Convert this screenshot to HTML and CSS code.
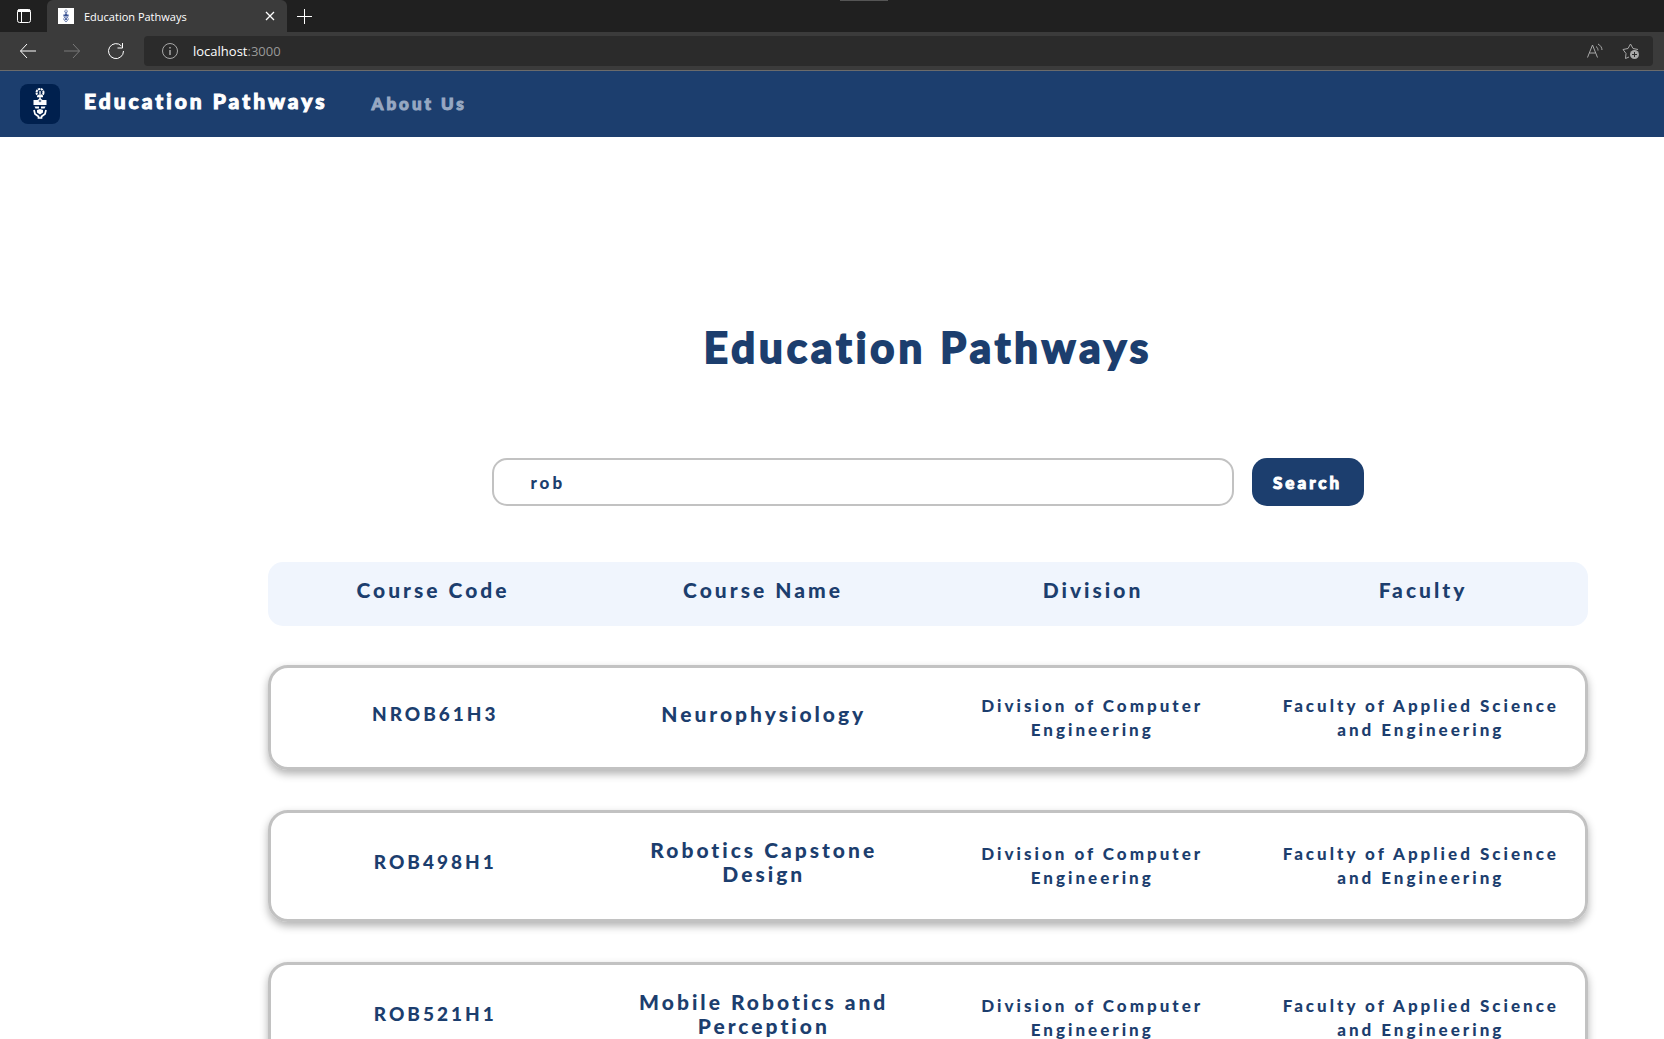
FILE: index.html
```html
<!DOCTYPE html>
<html lang="en">
<head>
<meta charset="utf-8">
<meta name="viewport" content="width=device-width, initial-scale=1">
<title>Education Pathways</title>
<link rel="stylesheet" href="styles.css">
</head>
<body>
<svg class="defs" aria-hidden="true">
  <symbol id="crest" viewBox="0 0 40 40">
    <g fill="none" stroke="currentColor">
      <circle cx="20" cy="8.500" r="3.500" stroke-width="2" stroke-dasharray="2.200 .6"/>
      <path d="M17 12.500h6M20 7v9" stroke-width="1.300"/>
    </g>
    <path fill="currentColor" d="M13.500 16h4l2.500-2 2.500 2h4v5h-13zM14.500 22.500h4.500v2h-3.500zM21 22.500h4.500l-1 2H21zM17 26l3-1 3 1v2.500l-3 2-3-2z"/>
    <circle cx="20" cy="17" r="1.300" fill="#00204e" opacity=".6"/>
    <path d="M14 26l1 4 3.500 2.500v1.500h3v-1.500l3.500-2.500 1-4" fill="none" stroke="currentColor" stroke-width="1.700"/>
  </symbol>
</svg>
<div class="window">
  <div class="tabs">
    <button class="tab-actions" aria-label="Tab actions">
      <svg width="16" height="16" viewBox="0 0 16 16"><rect x="1.500" y="1.500" width="13" height="13" rx="2"/><path d="M2 3.500h12M5.500 4v10" /><path d="M2 2.500h12" stroke-width="2"/></svg>
    </button>
    <div class="tab">
      <span class="favicon"><svg width="16" height="16"><use href="#crest"/></svg></span>
      <span class="tab-title">Education Pathways</span>
      <button class="close" aria-label="Close tab"><svg width="10" height="10" viewBox="0 0 10 10"><path d="M1 1l8 8M9 1l-8 8" stroke-width="1.300"/></svg></button>
    </div>
    <button class="new-tab" aria-label="New tab"><svg width="15" height="15" viewBox="0 0 15 15"><path d="M7.500 0v15M0 7.500h15"/></svg></button>
    <span class="handle"></span>
  </div>
  <div class="toolbar">
    <button aria-label="Back"><svg width="18" height="16" viewBox="0 0 18 16"><path d="M8 1L1.500 8 8 15M1.500 8H17"/></svg></button>
    <button class="disabled" aria-label="Forward"><svg width="18" height="16" viewBox="0 0 18 16"><path d="M10 1l6.500 7L10 15M16.500 8H1"/></svg></button>
    <button aria-label="Refresh"><svg width="18" height="18" viewBox="0 0 18 18"><path d="M16.500 9A7.500 7.500 0 1 1 14.500 4M15.500 1v5h-5"/></svg></button>
    <div class="address">
      <svg width="16" height="16" viewBox="0 0 16 16"><circle cx="8" cy="8" r="7.500"/><path d="M8 7v5M8 4v1.500" stroke-width="1.500"/></svg>
      <span class="url">localhost<span>:3000</span></span>
      <button aria-label="Read aloud"><svg width="18" height="16" viewBox="0 0 18 16"><path d="M1.500 14.500L6.500 2l5 12.500M3.500 10h6M10 3.500c1.500 1 2 2.500 2 4M12 1c2.500 1.500 4 3.500 4 6"/></svg></button>
      <button aria-label="Add to favorites"><svg width="18" height="18" viewBox="0 0 18 18"><path d="M7 15l-3.500 1.500.5-5L1 7.500l5-1L8.500 2 11 6.500l5 1"/><circle cx="12.500" cy="12.500" r="4.500" class="badge"/><path d="M12.500 10v5M10 12.500h5" class="badge-plus"/></svg></button>
    </div>
  </div>
  <div class="page">
    <nav class="navbar">
      <a class="logo" href="#" aria-label="Home"><svg width="40" height="40"><use href="#crest"/></svg></a>
      <a class="brand" href="#">Education Pathways</a>
      <a class="nav-link" href="#">About Us</a>
    </nav>
    <main>
      <h1>Education Pathways</h1>
      <form class="search">
        <input type="text" value="rob" aria-label="Search courses">
        <button type="button">Search</button>
      </form>
      <table>
        <thead>
          <tr><th scope="col">Course Code</th><th scope="col">Course Name</th><th scope="col">Division</th><th scope="col">Faculty</th></tr>
        </thead>
        <tbody>
          <tr><td class="major code">NROB61H3</td><td class="major">Neurophysiology</td><td>Division of Computer Engineering</td><td>Faculty of Applied Science and Engineering</td></tr>
          <tr><td class="major code">ROB498H1</td><td class="major">Robotics Capstone Design</td><td>Division of Computer Engineering</td><td>Faculty of Applied Science and Engineering</td></tr>
          <tr><td class="major code">ROB521H1</td><td class="major">Mobile Robotics and Perception</td><td>Division of Computer Engineering</td><td>Faculty of Applied Science and Engineering</td></tr>
        </tbody>
      </table>
    </main>
  </div>
</div>
</body>
</html>
```
FILE: styles.css
```css
* { box-sizing: border-box; }
body {
  margin: 0;
  background: #fff;
  color: #1c3e6e;
  font-family: Lato, "Open Sans", sans-serif;
  font-weight: 900;
}
button { border: 0; padding: 0; background: none; color: inherit; font: inherit; }
a { color: inherit; text-decoration: none; }
.defs { position: absolute; width: 0; height: 0; }
.window { display: flex; flex-direction: column; height: 100vh; }

/* Browser frame */
.tabs, .toolbar {
  color: #fff;
  font-family: "Open Sans", sans-serif;
  font-weight: 400;
}
.tabs svg, .toolbar svg { display: block; fill: none; stroke: currentColor; }
.tabs .favicon svg { stroke: none; }
.tabs { position: relative; display: flex; flex: none; height: 32px; background: #202020; }
.tab-actions { width: 47px; padding-left: 16px; }
.tab {
  display: flex;
  align-items: center;
  width: 240px;
  padding: 0 12px 0 11px;
  border-radius: 6px 6px 0 0;
  background: #3b3b3b;
  font-size: 11px;
}
.favicon { margin-right: 10px; background: #fff; color: #3c5596; }
.tab-title { flex: 1; }
.new-tab { padding: 0 10px; }
.handle { position: absolute; top: 0; left: 50%; width: 48px; height: 1px; margin-left: 8px; background: #555; }
.toolbar {
  display: flex;
  align-items: center;
  gap: 26px;
  flex: none;
  height: 39px;
  padding: 0 11px 0 19px;
  border-bottom: 1px solid #6b6b6b;
  background: #3b3b3b;
}
.disabled { color: #7a7a7a; }
.address {
  display: flex;
  flex: 1;
  align-items: center;
  gap: 18px;
  height: 30px;
  margin-left: -7px;
  padding: 0 13px 0 18px;
  border-radius: 4px;
  background: #2b2b2b;
  color: #a8a8a8;
}
.url { flex: 1; margin-left: -3px; color: #fff; font-size: 13px; }
.url span { color: #999; }
.toolbar .badge { fill: #a8a8a8; stroke: none; }
.badge-plus { stroke: #2b2b2b; }

/* Site */
.page { flex: 1; min-height: 0; overflow-y: auto; scrollbar-width: none; }
.navbar {
  display: flex;
  align-items: center;
  height: 66px;
  padding: 0 20px;
  background: #1c3e6e;
  color: #fff;
}
.logo { height: 40px; margin-right: 24px; border-radius: 8px; background: #00204e; }
.brand { padding-bottom: 7px; font-size: 21px; letter-spacing: 3px; }
.nav-link { margin-left: 44px; padding-bottom: 1px; color: #97a8c2; font-size: 17px; letter-spacing: 3px; }
.brand, .nav-link, .search button { -webkit-text-stroke: 1px currentColor; }
main { margin: 0 76px 0 268px; padding-bottom: 40px; }
h1 {
  margin: 0;
  padding: 182px 0 83px;
  font-size: 42px;
  line-height: 56px;
  letter-spacing: 4px;
  text-align: center;
  -webkit-text-stroke: 2px currentColor;
}
.search { display: flex; gap: 18px; width: 66%; margin: 0 auto 56px; }
.search input {
  flex: 1;
  min-width: 0;
  height: 48px;
  padding: 0 36px;
  border: 2px solid #c2c2c2;
  border-radius: 15px;
  outline: 0;
  color: inherit;
  font: inherit;
  font-size: 17px;
  letter-spacing: 3px;
}
.search button {
  width: 112px;
  border-radius: 15px;
  background: #1c3e6e;
  color: #fff;
  font-size: 17px;
  letter-spacing: 3px;
}
table, thead, tbody { display: block; }
tr {
  display: grid;
  grid-template-columns: repeat(4, 1fr);
  text-align: center;
}
th, td { padding: 0 20px; }
thead tr { height: 64px; padding-top: 16px; border-radius: 15px; background: #f0f5fd; }
th, .major { font-size: 21px; font-weight: 900; line-height: 24px; letter-spacing: 3px; }
tbody tr {
  align-items: center;
  min-height: 105px;
  margin-top: 40px;
  padding: 25px 0;
  border: 3px solid #c2c2c2;
  border-radius: 20px;
  box-shadow: 0 4px 8px rgba(0, 0, 0, .3);
}
tbody tr:first-child { margin-top: 39px; }
td { font-size: 17px; line-height: 24px; letter-spacing: 3px; }
td.major { padding: 0 20px 8px; font-size: 21px; }
td.code { font-size: 19px; }
```
